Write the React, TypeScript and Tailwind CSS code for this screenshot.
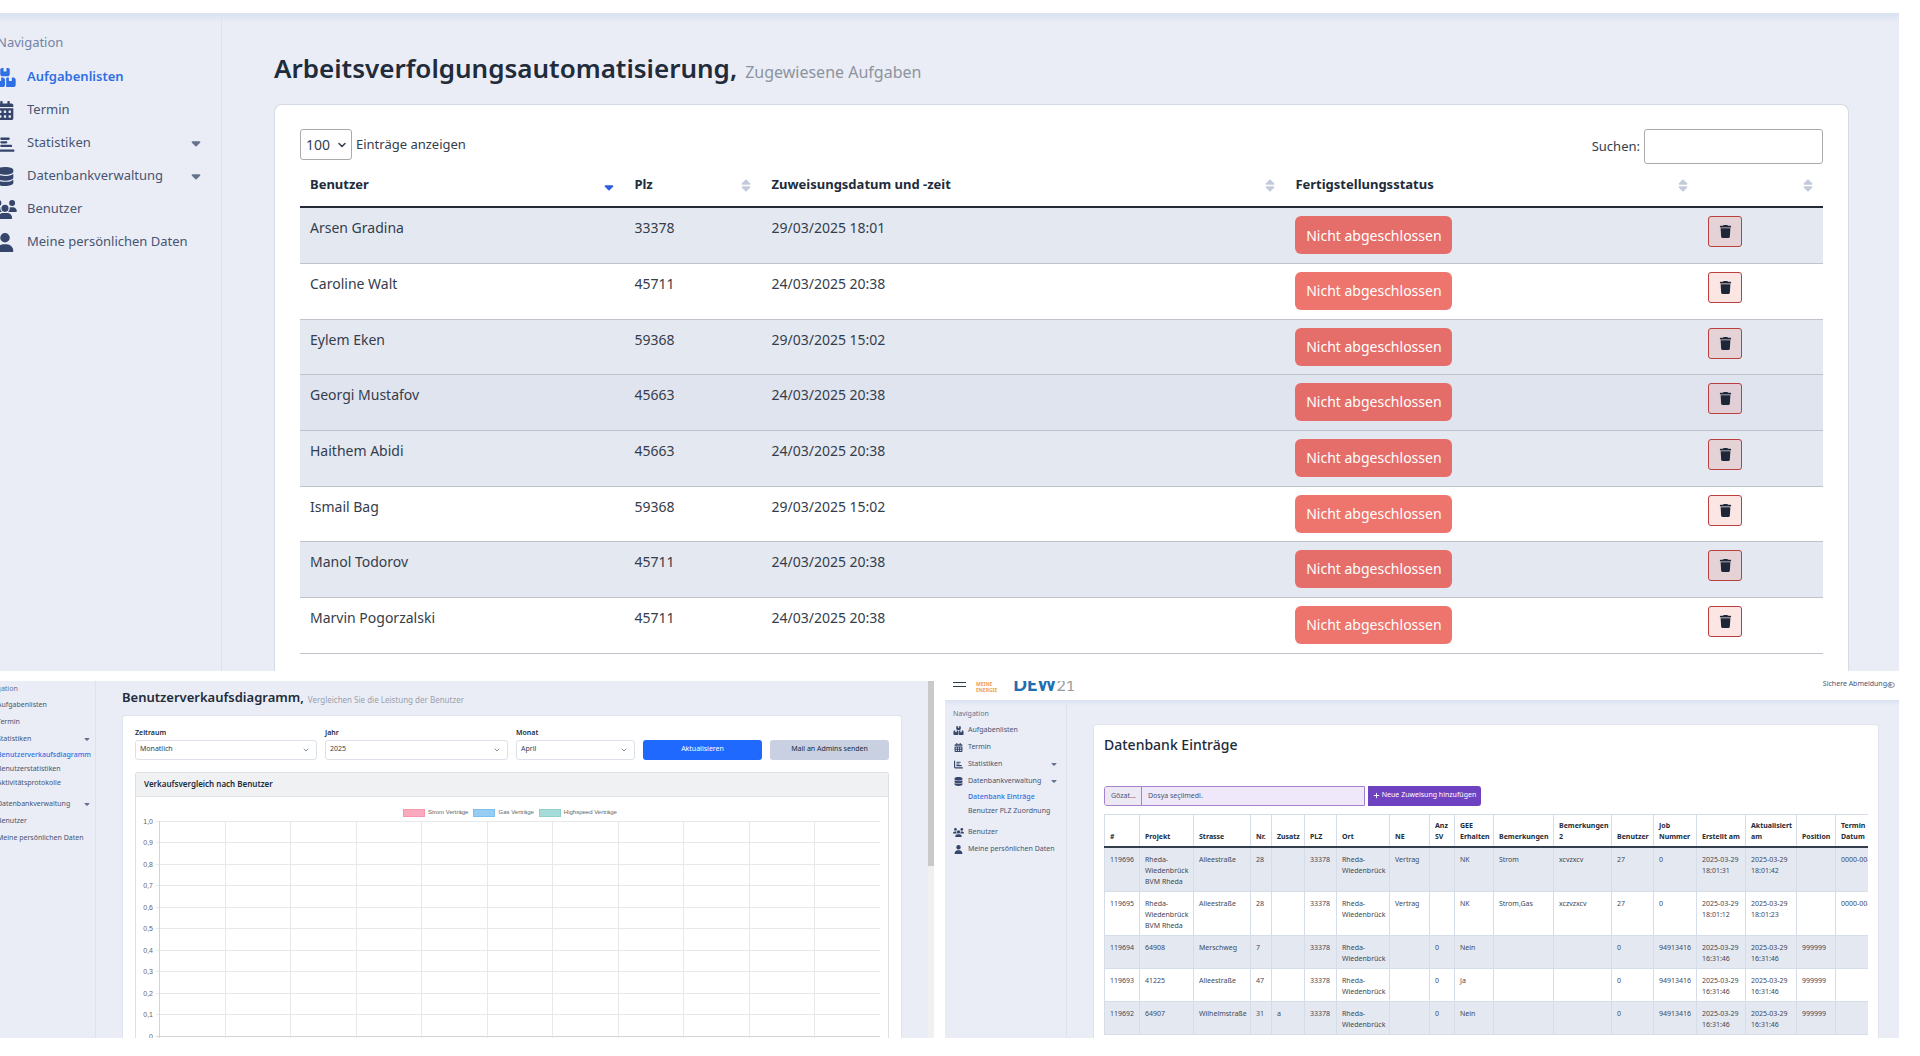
import { useId } from "react";
import clsx from "clsx";
import type { IconType } from "react-icons";
import { FaCalendarAlt } from "react-icons/fa";
import {
  FaBoxesStacked,
  FaCaretDown,
  FaCaretUp,
  FaChartBar,
  FaDatabase,
  FaPlus,
  FaTrash,
  FaUser,
  FaUsers,
} from "react-icons/fa6";
import { ChevronDown, ToggleLeft } from "lucide-react";

type NavItem = {
  label: string;
  icon: IconType;
  children?: string[];
  group?: boolean;
};

const navItems = (open: Record<string, string[]>): NavItem[] => [
  { label: "Aufgabenlisten", icon: FaBoxesStacked },
  { label: "Termin", icon: FaCalendarAlt },
  { label: "Statistiken", icon: FaChartBar, group: true, children: open["Statistiken"] },
  {
    label: "Datenbankverwaltung",
    icon: FaDatabase,
    group: true,
    children: open["Datenbankverwaltung"],
  },
  { label: "Benutzer", icon: FaUsers },
  { label: "Meine persönlichen Daten", icon: FaUser },
];

const tasks = [
  { name: "Arsen Gradina", plz: "33378", date: "29/03/2025 18:01", row: "bg-[#e4e8f1]" },
  { name: "Caroline Walt", plz: "45711", date: "24/03/2025 20:38", row: "" },
  { name: "Eylem Eken", plz: "59368", date: "29/03/2025 15:02", row: "bg-[#e4e8f1]" },
  { name: "Georgi Mustafov", plz: "45663", date: "24/03/2025 20:38", row: "bg-[#e0e4ef]" },
  { name: "Haithem Abidi", plz: "45663", date: "24/03/2025 20:38", row: "bg-[#e4e8f1]" },
  { name: "Ismail Bag", plz: "59368", date: "29/03/2025 15:02", row: "" },
  { name: "Manol Todorov", plz: "45711", date: "24/03/2025 20:38", row: "bg-[#e4e8f1]" },
  { name: "Marvin Pogorzalski", plz: "45711", date: "24/03/2025 20:38", row: "" },
];

const taskColumns = [
  { label: "Benutzer", width: "w-[21.3%]", sorted: true },
  { label: "Plz", width: "w-[9%]" },
  { label: "Zuweisungsdatum und -zeit", width: "w-[34.4%]" },
  { label: "Fertigstellungsstatus", width: "w-[27.1%]" },
  { label: "", width: "w-[8.2%]" },
];

const entryColumns = [
  { label: "#", width: "w-[35px]" },
  { label: "Projekt", width: "w-[54px]" },
  { label: "Strasse", width: "w-[57px]" },
  { label: "Nr.", width: "w-[21px]" },
  { label: "Zusatz", width: "w-[33px]" },
  { label: "PLZ", width: "w-[32px]" },
  { label: "Ort", width: "w-[53px]" },
  { label: "NE", width: "w-[40px]" },
  { label: "Anz SV", width: "w-[25px]" },
  { label: "GEE Erhalten", width: "w-[39px]" },
  { label: "Bemerkungen", width: "w-[60px]" },
  { label: "Bemerkungen 2", width: "w-[58px]" },
  { label: "Benutzer", width: "w-[42px]" },
  { label: "Job Nummer", width: "w-[43px]" },
  { label: "Erstellt am", width: "w-[49px]" },
  { label: "Aktualisiert am", width: "w-[51px]" },
  { label: "Position", width: "w-[39px]" },
  { label: "Termin Datum", width: "" },
];

const entries = [
  ["119696", "Rheda-Wiedenbrück BVM Rheda", "Alleestraße", "28", "", "33378", "Rheda-Wiedenbrück", "Vertrag", "", "NK", "Strom", "xcvzxcv", "27", "0", "2025-03-29 18:01:31", "2025-03-29 18:01:42", "", "0000-00-00"],
  ["119695", "Rheda-Wiedenbrück BVM Rheda", "Alleestraße", "28", "", "33378", "Rheda-Wiedenbrück", "Vertrag", "", "NK", "Strom,Gas", "xczvzxcv", "27", "0", "2025-03-29 18:01:12", "2025-03-29 18:01:23", "", "0000-00-00"],
  ["119694", "64908", "Merschweg", "7", "", "33378", "Rheda-Wiedenbrück", "", "0", "Nein", "", "", "0", "94913416", "2025-03-29 16:31:46", "2025-03-29 16:31:46", "999999", ""],
  ["119693", "41225", "Alleestraße", "47", "", "33378", "Rheda-Wiedenbrück", "", "0", "Ja", "", "", "0", "94913416", "2025-03-29 16:31:46", "2025-03-29 16:31:46", "999999", ""],
  ["119692", "64907", "Wilhelmstraße", "31", "a", "33378", "Rheda-Wiedenbrück", "", "0", "Nein", "", "", "0", "94913416", "2025-03-29 16:31:46", "2025-03-29 16:31:46", "999999", ""],
];

const legend = [
  { label: "Strom Verträge", swatch: "border-[#f598ad] bg-[#fbaabd]" },
  { label: "Gas Verträge", swatch: "border-[#7fbfec] bg-[#98cdf3]" },
  { label: "Highspeed Verträge", swatch: "border-[#8fd0cc] bg-[#a5dcda]" },
];

const ticks = ["1,0", "0,9", "0,8", "0,7", "0,6", "0,5", "0,4", "0,3", "0,2", "0,1", "0"];

const MainNav = () => (
  <nav className="w-[222px] shrink-0 overflow-hidden border-r border-[#dde2ec] pt-[17px] text-[13px] text-[#475573]">
    <div className="-ml-[7px]">
      <p className="mb-[11px] h-6 pl-1 leading-6 text-[#7183a8]">Navigation</p>
      <ul className="grid gap-[9px]">
        {navItems({}).map(({ label, icon: Icon, group }, i) => (
          <li key={label}>
            <a
              href="#"
              className={clsx(
                "flex h-6 items-center gap-[10px] pr-[18px]",
                i === 0 && "font-semibold text-[#2f6fe4]",
              )}
            >
              <Icon className={clsx("h-[19px] w-6 shrink-0", i > 0 && "text-[#35456b]")} />
              <span className="flex-1 whitespace-nowrap">{label}</span>
              {group && <FaCaretDown className="size-[14px] text-[#66738f]" />}
            </a>
          </li>
        ))}
      </ul>
    </div>
  </nav>
);

type SmallNavProps = {
  active: string;
  open: Record<string, string[]>;
  className?: string;
};

const SmallNav = ({ active, open, className }: SmallNavProps) => (
  <nav className={className}>
    <p className="mb-1 h-[13px] leading-[13px] text-[#5f7299]">Navigation</p>
    <ul className="grid gap-1">
      {navItems(open).map(({ label, icon: Icon, group, children }) => (
        <li key={label}>
          <a href="#" className="flex h-[13px] items-center gap-1">
            <Icon className="h-[9px] w-[11px] shrink-0 text-[#35456b]" />
            <span className="flex-1 whitespace-nowrap">{label}</span>
            {group && <FaCaretDown className="size-2 text-[#66738f]" />}
          </a>
          {children && (
            <ul className="mb-[5px] mt-[2px] grid gap-[1px] pl-[15px]">
              {children.map((child) => (
                <li key={child}>
                  <a
                    href="#"
                    className={clsx(
                      "block h-[13px] whitespace-nowrap leading-[13px]",
                      child === active && "font-medium text-[#2f6fe4]",
                    )}
                  >
                    {child}
                  </a>
                </li>
              ))}
            </ul>
          )}
        </li>
      ))}
    </ul>
  </nav>
);

const SortIcon = ({ sorted }: { sorted?: boolean }) =>
  sorted ? (
    <FaCaretDown className="mt-1 size-[14px] text-[#2f5fe0]" />
  ) : (
    <span className="flex flex-col text-[#c3cbdb]">
      <FaCaretUp className="-mb-[5px] size-[14px]" />
      <FaCaretDown className="-mt-[4px] size-[14px]" />
    </span>
  );

const TaskList = () => (
  <section className="flex overflow-hidden bg-[#eaedf5] bg-linear-to-b from-[#d9e2f2] to-[#eaedf5] to-[10px]">
    <MainNav />
    <main className="min-w-0 flex-1 pl-[52px] pr-[50px] pt-[35px]">
      <h1 className="mb-4 flex h-10 items-center gap-2 text-[26px] font-semibold text-[#212b3a]">
        Arbeitsverfolgungsautomatisierung,
        <small className="mt-2 text-[16px] font-normal text-[#8d939f]">Zugewiesene Aufgaben</small>
      </h1>
      <div className="rounded-t-lg border border-b-0 border-[#d5dbe5] bg-white px-[25px] pb-[17px] pt-6 text-[13px] text-[#343d4c]">
        <div className="flex items-start justify-between">
          <label className="flex items-center gap-1">
            <span className="relative">
              <select className="h-[31px] w-[52px] appearance-none rounded-[3px] border border-[#aaa] bg-white pl-[5px] text-[14px]">
                <option>100</option>
              </select>
              <ChevronDown className="pointer-events-none absolute right-1 top-[10px] size-3" strokeWidth={3} />
            </span>
            Einträge anzeigen
          </label>
          <label className="flex items-center gap-1">
            Suchen:
            <input type="search" className="h-[35px] w-[179px] rounded-[3px] border border-[#aaa] bg-white" />
          </label>
        </div>
        <table className="w-full table-fixed border-collapse text-[14px]">
          <thead>
            <tr className="h-[43px] border-b-2 border-[#232b38] text-left">
              {taskColumns.map(({ label, width, sorted }) => (
                <th key={label} scope="col" className={clsx(width, "pl-[10px] pr-2 text-[13px] font-bold text-[#212b3a]")}>
                  <span className="flex items-center justify-between">
                    <span>{label}</span>
                    <SortIcon sorted={sorted} />
                  </span>
                </th>
              ))}
            </tr>
          </thead>
          <tbody>
            {tasks.map(({ name, plz, date, row }) => (
              <tr key={name} className={clsx("h-14 border-b border-[#bfc3ca] align-top nth-[3n]:h-[55px]", row)}>
                <td className="px-[10px] pt-[9px]">{name}</td>
                <td className="px-[10px] pt-[9px]">{plz}</td>
                <td className="px-[10px] pt-[9px]">{date}</td>
                <td className="px-[10px] pt-2">
                  <button className="block h-[38px] w-[157px] rounded-md bg-[#e73a30]/70 text-[14px] text-white">
                    Nicht abgeschlossen
                  </button>
                </td>
                <td className="px-[10px] pt-2">
                  <button
                    aria-label="Löschen"
                    className="flex h-[31px] w-[34px] items-center justify-center rounded-[3px] border border-[#b9403c] bg-[#e73a30]/13"
                  >
                    <FaTrash className="size-[13px] text-[#1d2738]" />
                  </button>
                </td>
              </tr>
            ))}
          </tbody>
        </table>
      </div>
    </main>
  </section>
);

type FilterProps = { label: string; value: string; className: string };

const Filter = ({ label, value, className }: FilterProps) => {
  const id = useId();
  return (
    <div className={className}>
      <label htmlFor={id} className="block h-[14px] leading-[13px] font-semibold text-[#212b3a]">
        {label}
      </label>
      <div className="relative">
        <select
          id={id}
          className="block h-5 w-full appearance-none rounded-[3px] border border-[#dce1e9] bg-white pl-1 text-[#343d4c]"
        >
          <option>{value}</option>
        </select>
        <ChevronDown className="pointer-events-none absolute right-[7px] top-[6px] size-2 text-[#47536a]" />
      </div>
    </div>
  );
};

const SalesChart = () => (
  <svg viewBox="0 0 752 221" className="block w-full">
    {ticks.map((tick, i) => (
      <g key={tick}>
        <line
          x1="20"
          x2="744"
          y1={4.5 + Math.round(i * 21.45)}
          y2={4.5 + Math.round(i * 21.45)}
          stroke={tick === "0" ? "#d4d4d4" : "#e8e8e8"}
        />
        <text
          x="17"
          y={7 + Math.round(i * 21.45)}
          textAnchor="end"
          fontFamily="Liberation Sans"
          fontSize="7"
          fill="#666"
        >
          {tick}
        </text>
      </g>
    ))}
    {ticks.map((tick, i) => (
      <line
        key={tick}
        x1={23.5 + Math.round(i * 65.5)}
        x2={23.5 + Math.round(i * 65.5)}
        y1="4"
        y2="221"
        stroke={i === 0 ? "#d4d4d4" : "#e8e8e8"}
      />
    ))}
  </svg>
);

const SalesReport = () => (
  <section className="flex overflow-hidden bg-[#eaedf5] text-[7px] text-[#475573]">
    <div className="w-24 shrink-0 overflow-hidden border-r border-[#dde2ec] pt-[1px]">
      <SmallNav
        active="Benutzerverkaufsdiagramm"
        open={{
          Statistiken: ["Benutzerverkaufsdiagramm", "Benutzerstatistiken", "Aktivitätsprotokolle"],
        }}
        className="-ml-[18px] pr-3"
      />
    </div>
    <main className="min-w-0 flex-1 pl-[26px] pr-[26px] pt-2">
      <h2 className="mb-[7px] flex h-[19px] items-center gap-1 text-[13px] font-semibold text-[#212b3a]">
        Benutzerverkaufsdiagramm,
        <small className="mt-1 text-[8px] font-normal text-[#9aa1ae]">
          Vergleichen Sie die Leistung der Benutzer
        </small>
      </h2>
      <div className="rounded-t border border-b-0 border-[#dfe4ec] bg-white px-3 pt-[10px]">
        <div className="flex items-end gap-2">
          <Filter label="Zeitraum" value="Monatlich" className="flex-[182]" />
          <Filter label="Jahr" value="2025" className="flex-[183]" />
          <Filter label="Monat" value="April" className="flex-[119]" />
          <button className="h-5 flex-[119] rounded-[3px] bg-[#1f69ff] text-white">Aktualisieren</button>
          <button className="h-5 flex-[119] rounded-[3px] bg-[#c8d0e1] text-[#212b3a]">
            Mail an Admins senden
          </button>
        </div>
        <div className="mt-3 rounded-t-[3px] border border-b-0 border-[#dce1e6]">
          <h3 className="h-6 border-b border-[#e2e5e9] bg-[#f0f1f3] pl-2 text-[8px] font-semibold leading-[21px] text-[#212b3a]">
            Verkaufsvergleich nach Benutzer
          </h3>
          <ul className="flex h-5 items-end justify-center gap-[5px] pr-1 font-['Liberation_Sans'] text-[6px] text-[#666]">
            {legend.map(({ label, swatch }) => (
              <li key={label} className="flex h-2 items-center gap-[3px]">
                <span className={clsx("h-2 w-[22px] border", swatch)} />
                {label}
              </li>
            ))}
          </ul>
          <SalesChart />
        </div>
      </div>
    </main>
    <div className="w-[6px] shrink-0 bg-[#f0f0f0]">
      <div className="h-[52%] bg-[#c9c9c9]" />
    </div>
  </section>
);

const Database = () => (
  <section className="flex min-w-0 flex-col overflow-hidden bg-white text-[7px] text-[#475573]">
    <header className="flex h-[19px] items-start overflow-hidden pl-2 pr-1">
      <button aria-label="Menü" className="mt-[1px] grid w-[13px] gap-[3px]">
        <span className="h-[1px] bg-[#343d4c]" />
        <span className="h-[1px] bg-[#343d4c]" />
      </button>
      <span className="ml-[10px] text-[5px] font-bold leading-[6px] text-[#f0a04b]">
        MEINE
        <br />
        ENERGIE
      </span>
      <span className="ml-4 -mt-[6px] font-['Lato'] text-[18px] font-black leading-[18px] text-[#1f6fae]">
        DEW<span className="text-[16px] font-normal text-[#9d9d9c]">21</span>
      </span>
      <a href="#" className="ml-auto flex h-2 items-center">
        Sichere Abmeldung
        <ToggleLeft className="size-2" />
      </a>
    </header>
    <div className="flex flex-1 bg-[#eaedf5] bg-linear-to-b from-[#d9e2f2] to-[#eaedf5] to-[6px]">
      <SmallNav
        active="Datenbank Einträge"
        open={{ Datenbankverwaltung: ["Datenbank Einträge", "Benutzer PLZ Zuordnung"] }}
        className="w-[122px] shrink-0 border-r border-[#dde2ec] pl-2 pr-2 pt-[7px]"
      />
      <main className="min-w-0 flex-1 pl-[26px] pr-5 pt-6">
        <div className="h-full rounded-t border border-b-0 border-[#e0e5ed] bg-white px-[10px] pt-2">
          <h2 className="text-[14px] font-medium leading-6 text-[#212b3a]">Datenbank Einträge</h2>
          <div className="mt-[29px] flex gap-[3px]">
            <label className="flex h-5 w-[261px] cursor-pointer overflow-hidden rounded-l-[3px] border border-[#a383cd] bg-[#efe8fa] leading-[18px]">
              <span className="w-[37px] border-r border-[#a383cd] bg-[#ece9f4] pl-[6px]">Gözat...</span>
              <span className="pl-[6px]">Dosya seçilmedi.</span>
              <input type="file" className="sr-only" />
            </label>
            <button className="flex h-5 w-[113px] items-center justify-center gap-[2px] whitespace-nowrap rounded-r-[3px] bg-[#6f42c1] text-white">
              <FaPlus className="size-[7px]" />
              Neue Zuweisung hinzufügen
            </button>
          </div>
          <div className="mt-2 overflow-hidden">
            <table className="w-full table-fixed border-collapse border-l border-t border-[#d5dde8] leading-[11px] text-[#3f4858]">
              <thead>
                <tr className="h-[33px] border-b-2 border-[#343d4c] text-left align-bottom">
                  {entryColumns.map(({ label, width }) => (
                    <th
                      key={label}
                      scope="col"
                      className={clsx(width, "border-r border-[#d5dde8] pb-1 pl-[5px] font-bold text-[#212b3a] last:border-r-0")}
                    >
                      {label}
                    </th>
                  ))}
                </tr>
              </thead>
              <tbody>
                {entries.map((cells) => (
                  <tr key={cells[0]} className="border-b border-[#d5dde8] align-top odd:bg-[#e4e8f1]">
                    {cells.map((cell, i) => (
                      <td
                        key={i}
                        className="border-r border-[#d5dde8] pb-1 pl-[5px] pt-[6px] last:whitespace-nowrap last:border-r-0"
                      >
                        {cell}
                      </td>
                    ))}
                  </tr>
                ))}
              </tbody>
            </table>
          </div>
        </div>
      </main>
    </div>
  </section>
);

const App = () => (
  <div className="grid gap-[10px] bg-white pb-[19px] pr-[21px] pt-[13px] font-['Noto_Sans',sans-serif]">
    <TaskList />
    <div className="grid grid-cols-[934fr_954fr] gap-[11px]">
      <SalesReport />
      <Database />
    </div>
  </div>
);

export default App;
